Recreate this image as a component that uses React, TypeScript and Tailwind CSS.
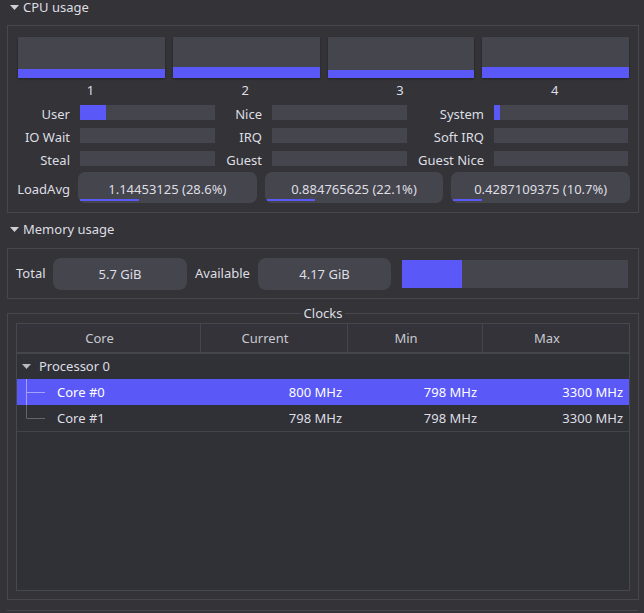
import React from 'react';

const Tri = ({ color = '#cfcfd6' }: { color?: string }) => (
  <svg width="9" height="5" viewBox="0 0 9 5" className="shrink-0">
    <polygon points="0,0 9,0 4.5,5" fill={color} />
  </svg>
);

const cores = [
  { n: 1, fill: 'h-[9px]' },
  { n: 2, fill: 'h-[11px]' },
  { n: 3, fill: 'h-[8px]' },
  { n: 4, fill: 'h-[11px]' },
];

// label widths include the gap to the bar
const statCols = [
  { label: 'w-[72px]', bar: 'w-[135px]' },
  { label: 'w-[57px]', bar: 'w-[135px]' },
  { label: 'w-[87px]', bar: 'w-[134px]' },
];

const statRows = [
  [
    { name: 'User', fill: 'w-[26px]' },
    { name: 'Nice', fill: 'w-0' },
    { name: 'System', fill: 'w-[6px]' },
  ],
  [
    { name: 'IO Wait', fill: 'w-0' },
    { name: 'IRQ', fill: 'w-0' },
    { name: 'Soft IRQ', fill: 'w-0' },
  ],
  [
    { name: 'Steal', fill: 'w-0' },
    { name: 'Guest', fill: 'w-0' },
    { name: 'Guest Nice', fill: 'w-0' },
  ],
];

const loads = [
  { text: '1.14453125 (28.6%)', fill: 'w-[59px]' },
  { text: '0.884765625 (22.1%)', fill: 'w-[48px]' },
  { text: '0.4287109375 (10.7%)', fill: 'w-[29px]' },
];

const clockRows = [
  { core: 'Core #0', cur: '800 MHz', min: '798 MHz', max: '3300 MHz', selected: true, last: false },
  { core: 'Core #1', cur: '798 MHz', min: '798 MHz', max: '3300 MHz', selected: false, last: true },
];

function Branch({ selected, last }: { selected: boolean; last: boolean }) {
  const c = selected ? '#a3a2fa' : '#65656e';
  return (
    <svg width="40" height="26" viewBox="0 0 40 26" className="shrink-0">
      <line x1="9.5" y1="0" x2="9.5" y2={last ? 13.5 : 26} stroke={c} strokeWidth="1" />
      <line x1="10" y1="13.5" x2="28" y2="13.5" stroke={c} strokeWidth="1" />
    </svg>
  );
}

export default function App() {
  return (
    <div className="w-[644px] h-[613px] overflow-hidden bg-[#333338] text-[13px] text-[#dedee3] font-['Noto_Sans',sans-serif]">
      {/* CPU usage */}
      <div className="ml-[10px] flex h-[15px] items-center gap-[4px] leading-[15px]">
        <Tri />
        <span>CPU usage</span>
      </div>

      <div className="ml-[7px] mt-[10px] w-[632px] border border-[#47474e] pt-[11px] pb-[9px]">
        <div className="ml-[10px] grid w-[611px] grid-cols-4 gap-x-[8px]">
          {cores.map((c) => (
            <div key={c.n}>
              <div className="flex h-[41px] flex-col justify-end bg-[#45454d] shadow-[0_1px_2px_rgba(0,0,0,0.35)]">
                <div className={`${c.fill} bg-[#5a58f6]`} />
              </div>
              <div className="mt-[4px] h-[17px] pr-[2px] text-center leading-[17px]">{c.n}</div>
            </div>
          ))}
        </div>

        <div className="mt-[6px] flex flex-col gap-[8px]">
          {statRows.map((row, ri) => (
            <div key={ri} className="flex h-[15px] items-start">
              {row.map((s, ci) => (
                <React.Fragment key={s.name}>
                  <div className={`${statCols[ci].label} h-[15px] pr-[10px] text-right leading-[18px] whitespace-nowrap`}>
                    {s.name}
                  </div>
                  <div className={`${statCols[ci].bar} flex h-[15px] bg-[#45454d]`}>
                    <div className={`${s.fill} h-full bg-[#5a58f6]`} />
                  </div>
                </React.Fragment>
              ))}
            </div>
          ))}
        </div>

        <div className="mt-[6px] mr-[8px] flex h-[31px]">
          <div className="w-[70px] pr-[8px] text-right leading-[34px]">LoadAvg</div>
          <div className="flex flex-1 gap-[8px]">
            {loads.map((l) => (
              <div key={l.text} className="relative h-[31px] flex-1 rounded-[7px] bg-[#45454d] text-center leading-[34px]">
                {l.text}
                <div className={`absolute bottom-[2px] left-[2px] h-[2px] ${l.fill} bg-[#5a58f6]`} />
              </div>
            ))}
          </div>
        </div>
      </div>

      {/* Memory usage */}
      <div className="ml-[10px] mt-[9px] flex h-[15px] items-center gap-[4px] leading-[15px]">
        <Tri />
        <span>Memory usage</span>
      </div>

      <div className="ml-[7px] mt-[11px] flex h-[51px] w-[632px] items-center border border-[#47474e] pl-[8px]">
        <div className="w-[37px]">Total</div>
        <div className="h-[32px] w-[134px] rounded-[8px] bg-[#45454d] text-center leading-[33px]">5.7 GiB</div>
        <div className="ml-[8px] w-[63px]">Available</div>
        <div className="h-[32px] w-[133px] rounded-[8px] bg-[#45454d] text-center leading-[33px]">4.17 GiB</div>
        <div className="ml-[11px] flex h-[28px] w-[226px] bg-[#45454d]">
          <div className="w-[60px] bg-[#5a58f6]" />
        </div>
      </div>

      {/* Clocks */}
      <fieldset className="ml-[7px] mt-[7px] w-[632px] border border-[#47474e] px-[8px] pt-[2px] pb-[8px]">
        <legend className="mx-auto px-[3px] leading-[15px]">Clocks</legend>
        <div className="h-[268px] border border-[#47474e] bg-[#303037]">
          <div className="flex h-[30px] border-b-2 border-[#45454c] bg-[#333339] text-[#c9c9d0] leading-[28px]">
            <div className="w-[184px] border-r border-[#45454c] pr-[18px] text-center">Core</div>
            <div className="w-[147px] border-r border-[#45454c] pr-[18px] text-center">Current</div>
            <div className="w-[135px] border-r border-[#45454c] pr-[18px] text-center">Min</div>
            <div className="flex-1 pr-[18px] text-center">Max</div>
          </div>

          <div className="flex h-[25px] items-center pl-[5px]">
            <Tri color="#b9b9c1" />
            <span className="ml-[8px] leading-[25px]">Processor 0</span>
          </div>

          {clockRows.map((r) => (
            <div
              key={r.core}
              className={`flex h-[26px] items-center leading-[26px] ${r.selected ? 'bg-[#5a58f6] text-white' : ''} ${r.last ? 'border-b border-[#43434a] h-[27px]' : ''}`}
            >
              <div className="flex w-[184px] items-center">
                <Branch selected={r.selected} last={r.last} />
                <span>{r.core}</span>
              </div>
              <div className="w-[147px] pr-[6px] text-right">{r.cur}</div>
              <div className="w-[135px] pr-[6px] text-right">{r.min}</div>
              <div className="flex-1 pr-[6px] text-right">{r.max}</div>
            </div>
          ))}
        </div>
      </fieldset>

      <div className="ml-[7px] mt-[10px] w-[631px] border-t border-[#47474e]" />
    </div>
  );
}
